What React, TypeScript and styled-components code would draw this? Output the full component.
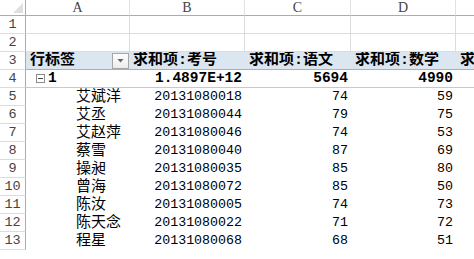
import React from 'react';
import styled, {createGlobalStyle, css} from "styled-components";

const GlobalStyle = createGlobalStyle`
  html, body {
    margin: 0;
    padding: 0;
    background: #fff;
  }
`

const CJK = `"Liberation Mono", "Noto Sans CJK SC", monospace`

const Sheet = styled.div`
  display: grid;
  grid-template-columns: 26px 104px 115px 106px 105px 110px;
  grid-template-rows: 16px repeat(13, 18px);
  width: 474px;
  height: 259px;
  overflow: hidden;
  font-family: ${CJK};
  line-height: 1;
  color: #000;
`

const Corner = styled.div`
  box-sizing: border-box;
  border-right: 1px solid #ababab;
  border-bottom: 1px solid #ababab;
  display: flex;
  align-items: flex-end;
  justify-content: flex-end;
  padding: 0 2px 2px 0;

  &::after {
    content: "";
    width: 10px;
    height: 10px;
    background: #dfdfdf;
    clip-path: polygon(100% 0, 100% 100%, 0 100%);
  }
`

const ColHead = styled.div`
  box-sizing: border-box;
  border-right: 1px solid #e1e1e1;
  border-bottom: 1px solid #ababab;
  display: flex;
  align-items: center;
  justify-content: center;
  font-family: "Liberation Serif", serif;
  font-size: 14px;
  color: #444;
`

const RowHead = styled.div`
  box-sizing: border-box;
  border-right: 1px solid #ababab;
  border-bottom: 1px solid #dadcdd;
  display: flex;
  align-items: center;
  justify-content: center;
  font-size: 13.5px;
  color: #444;
`

type Kind = "grid" | "head" | "total" | "item"

const Cell = styled.div<{ $kind: Kind; $right?: boolean; $indent?: number }>`
  box-sizing: border-box;
  display: flex;
  align-items: center;
  justify-content: ${p => p.$right ? "flex-end" : "flex-start"};
  padding: 0 ${p => p.$right ? 3 : 0}px 0 ${p => p.$indent ?? 3}px;
  white-space: nowrap;
  overflow: hidden;
  font-size: 13.3px;

  ${p => p.$kind === "grid" && css`
    border-right: 1px solid #dadcdd;
    border-bottom: 1px solid #dadcdd;
  `}
  ${p => p.$kind === "head" && css`
    background: #dce6f1;
    border-bottom: 1px solid #95b3d7;
    font-size: 15px;
    font-weight: bold;
  `}
  ${p => p.$kind === "total" && css`
    border-bottom: 1px solid #b8cce4;
    font-size: 14.5px;
    font-weight: bold;
  `}
`

const Name = styled.span`
  font-size: 15px;
`

const FilterButton = styled.span`
  box-sizing: border-box;
  width: 17px;
  height: 16px;
  margin-left: auto;
  margin-right: 1px;
  border: 1px solid #a6a6a6;
  background: linear-gradient(#fdfdfd, #ececec);
  display: flex;
  align-items: center;
  justify-content: center;

  &::after {
    content: "";
    width: 7px;
    height: 4px;
    background: #666;
    clip-path: polygon(0 0, 100% 0, 50% 100%);
  }
`

const Collapse = styled.span`
  box-sizing: border-box;
  width: 9px;
  height: 9px;
  margin-right: 3px;
  border: 1px solid #8c8c8c;
  display: flex;
  align-items: center;
  justify-content: center;

  &::after {
    content: "";
    width: 5px;
    height: 1px;
    background: #444;
  }
`

const students = [
    ["艾斌洋", "20131080018", "74", "59"],
    ["艾丞", "20131080044", "79", "75"],
    ["艾赵萍", "20131080046", "74", "53"],
    ["蔡雪", "20131080040", "87", "69"],
    ["操昶", "20131080035", "85", "80"],
    ["曾海", "20131080072", "85", "50"],
    ["陈汝", "20131080005", "74", "73"],
    ["陈天念", "20131080022", "71", "72"],
    ["程星", "20131080068", "68", "51"],
]

const columns = ["A", "B", "C", "D", "E"]

export default function App() {
    return (
        <>
            <GlobalStyle/>
            <Sheet>
                <Corner/>
                {columns.map(c => <ColHead key={c}>{c}</ColHead>)}

                {[1, 2].map(r => (
                    <React.Fragment key={r}>
                        <RowHead>{r}</RowHead>
                        {columns.map(c => <Cell key={c} $kind="grid"/>)}
                    </React.Fragment>
                ))}

                <RowHead>3</RowHead>
                <Cell $kind="head" $indent={4}>行标签<FilterButton/></Cell>
                <Cell $kind="head">求和项:考号</Cell>
                <Cell $kind="head" $indent={4}>求和项:语文</Cell>
                <Cell $kind="head" $indent={4}>求和项:数学</Cell>
                <Cell $kind="head" $indent={4}>求和项:英语</Cell>

                <RowHead>4</RowHead>
                <Cell $kind="total" $indent={10}><Collapse/>1</Cell>
                <Cell $kind="total" $right>1.4897E+12</Cell>
                <Cell $kind="total" $right>5694</Cell>
                <Cell $kind="total" $right>4990</Cell>
                <Cell $kind="total"/>

                {students.map(([name, id, chinese, math], i) => (
                    <React.Fragment key={id}>
                        <RowHead>{i + 5}</RowHead>
                        <Cell $kind="item" $indent={50}><Name>{name}</Name></Cell>
                        <Cell $kind="item" $right>{id}</Cell>
                        <Cell $kind="item" $right>{chinese}</Cell>
                        <Cell $kind="item" $right>{math}</Cell>
                        <Cell $kind="item"/>
                    </React.Fragment>
                ))}
            </Sheet>
        </>
    );
}
